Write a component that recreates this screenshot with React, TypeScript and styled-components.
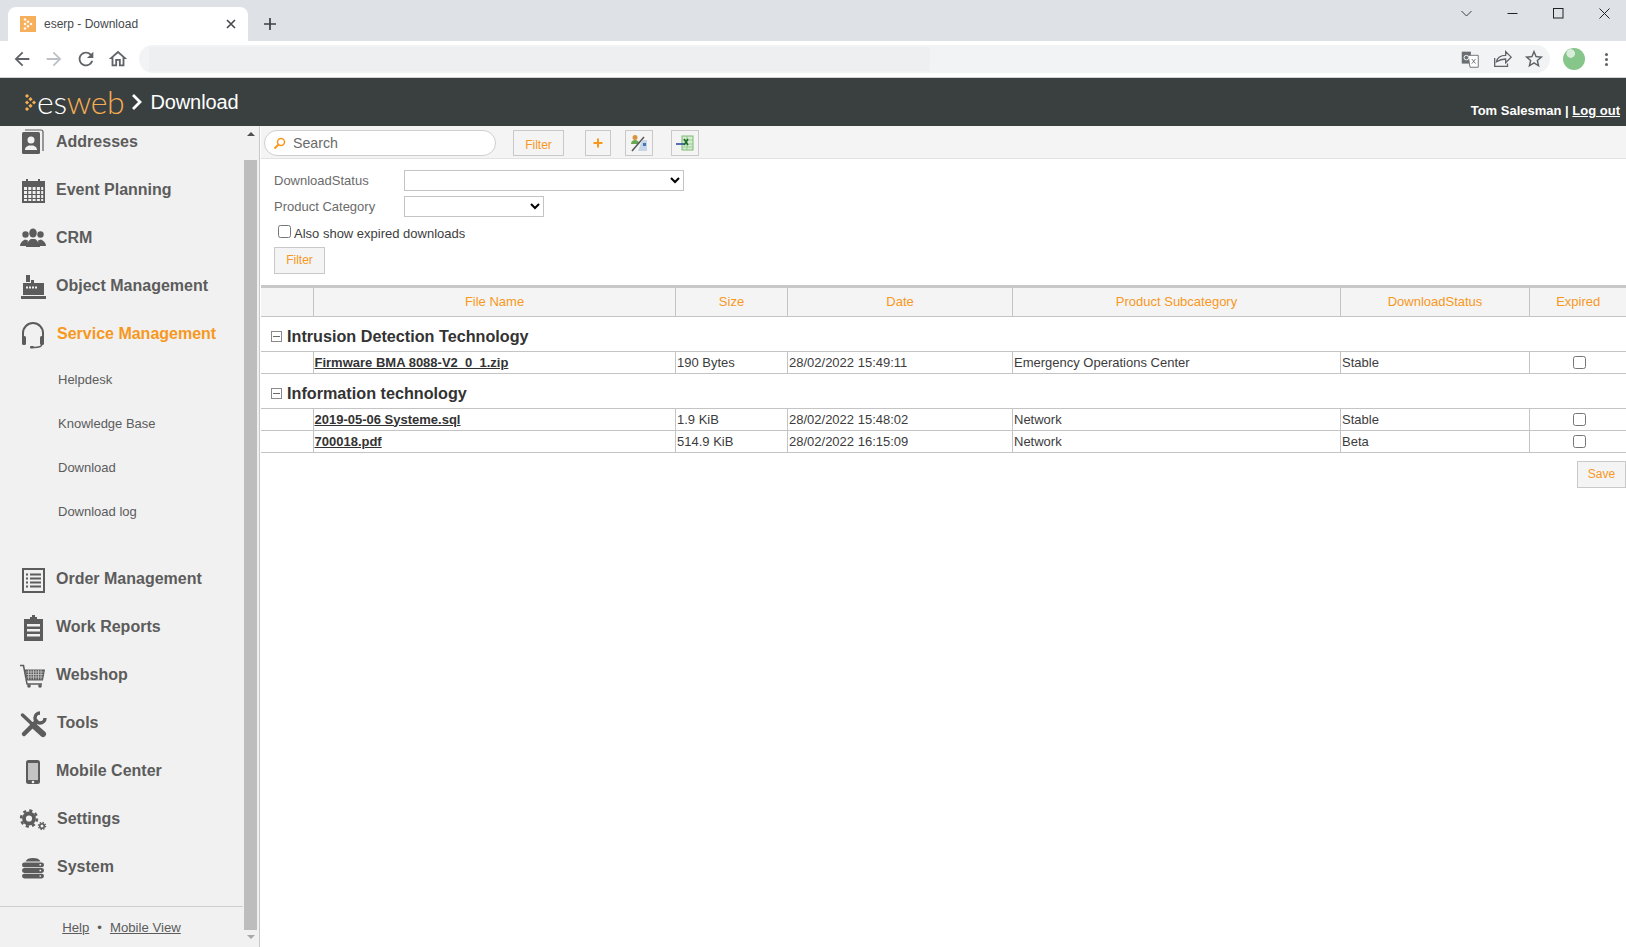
import React from 'react';
import styled, { createGlobalStyle } from 'styled-components';

const ORANGE = '#f7981d';
const GREY = '#5c5c5c';

const GlobalStyle = createGlobalStyle`
    html, body {
        margin: 0;
        height: 100%;
        overflow: hidden;
        font-family: "Liberation Sans", Arial, sans-serif;
        background: #fff;
    }
`;

const Page = styled.div`
    width: 1626px;
    height: 947px;
    display: flex;
    flex-direction: column;
    overflow: hidden;
`;

/* browser chrome */
const TabStrip = styled.div`
    height: 41px;
    flex: none;
    background: #dee1e6;
    display: flex;
    align-items: flex-end;
    padding-left: 8px;
`;

const Tab = styled.div`
    width: 240px;
    height: 34px;
    background: #fff;
    border-radius: 8px 8px 0 0;
    display: flex;
    align-items: center;
    padding: 0 12px;
    box-sizing: border-box;
    font-size: 12px;
    color: #45494d;
    gap: 8px;
`;

const TabTitle = styled.span`
    flex: 1;
`;

const NewTab = styled.div`
    width: 40px;
    height: 34px;
    display: flex;
    align-items: center;
    justify-content: center;
    margin-left: 2px;
`;

const WindowControls = styled.div`
    margin-left: auto;
    align-self: flex-start;
    display: flex;
    height: 26px;
    align-items: center;
    gap: 35px;
    padding-right: 16px;
`;

const ChromeBar = styled.div`
    height: 36px;
    flex: none;
    background: #fff;
    border-bottom: 1px solid #d0d2d5;
    display: flex;
    align-items: center;
    padding-left: 11px;
    gap: 10px;
    box-sizing: content-box;
`;

const NavIcon = styled.svg`
    width: 22px;
    height: 22px;
    flex: none;
`;

const AddressBar = styled.div`
    width: 1411px;
    height: 28px;
    background: #f1f3f4;
    border-radius: 14px;
    display: flex;
    align-items: center;
    padding-right: 5px;
    box-sizing: border-box;
    gap: 10px;
`;

const AddressRedact = styled.div`
    width: 781px;
    height: 24px;
    margin-left: 10px;
    background: #eeeff0;
    margin-right: auto;
`;

const Avatar = styled.div`
    width: 22px;
    height: 22px;
    flex: none;
    margin-left: 3px;
    border-radius: 50%;
    background: radial-gradient(circle at 35% 25%, #d8ecd9 0 4px, #86c68a 4.5px);
`;

const MenuDots = styled.div`
    width: 3px;
    height: 3px;
    flex: none;
    margin-left: 10px;
    border-radius: 50%;
    background: #5f6368;
    box-shadow: 0 -5px 0 #5f6368, 0 5px 0 #5f6368;
`;

/* application header */
const AppHeader = styled.header`
    height: 48px;
    flex: none;
    background: #3a3f3f;
    color: #fff;
    display: flex;
    align-items: center;
    padding: 0 6px 0 25px;
`;

const LogoWord = styled.span`
    font-family: "Lato", "Liberation Sans", sans-serif;
    font-weight: 300;
    font-size: 32px;
    line-height: 1;
    margin-left: 1px;
    color: #fff;
    letter-spacing: -0.3px;
`;

const LogoAccent = styled.span`
    color: #f4ad53;
`;

const LogoChevron = styled.svg`
    margin-left: 6px;
    flex: none;
`;

const HeaderTitle = styled.span`
    font-size: 20px;
    margin-left: 6px;
    letter-spacing: -0.1px;
`;

const UserBox = styled.div`
    margin-left: auto;
    align-self: flex-end;
    padding-bottom: 8px;
    font-size: 13px;
    font-weight: bold;
`;

const UserLink = styled.a`
    color: #fff;
    text-decoration: underline;
`;

const Body = styled.div`
    flex: 1;
    min-height: 0;
    display: flex;
`;

/* sidebar */
const Sidebar = styled.aside`
    width: 259px;
    flex: none;
    box-sizing: content-box;
    background: #f1f1f1;
    border-right: 1px solid #c8c8c8;
    display: flex;
`;

const SideColumn = styled.div`
    width: 243px;
    flex: none;
    display: flex;
    flex-direction: column;
    overflow: hidden;
`;

const NavList = styled.nav`
    flex: 1;
    min-height: 0;
    overflow: hidden;
`;

const NavScroll = styled.div`
    margin-top: -8px;
`;

const NavItem = styled.div<{ $active?: boolean }>`
    height: 48px;
    display: flex;
    align-items: center;
    padding-left: 18px;
    font-size: 16px;
    font-weight: bold;
    color: ${(p) => (p.$active ? ORANGE : GREY)};
`;

const ItemIcon = styled.svg<{ $nudge?: boolean }>`
    width: 30px;
    height: 30px;
    flex: none;
    margin-right: ${(p) => (p.$nudge ? '9px' : '8px')};
`;

const SubItem = styled.div`
    height: 44px;
    display: flex;
    align-items: center;
    padding-left: 58px;
    font-size: 13px;
    color: ${GREY};
`;

const SubList = styled.div`
    margin: -1px 0 22px;
`;

const SideFooter = styled.div`
    height: 40px;
    flex: none;
    border-top: 1px solid #cfcfcf;
    display: flex;
    align-items: center;
    justify-content: center;
    gap: 8px;
    font-size: 13.2px;
    color: ${GREY};
`;

const FooterLink = styled.a`
    color: ${GREY};
    text-decoration: underline;
`;

const SideScrollbar = styled.div`
    width: 16px;
    flex: none;
    display: flex;
    flex-direction: column;
`;

const ScrollArrow = styled.div<{ $down?: boolean }>`
    height: ${(p) => (p.$down ? '17px' : '34px')};
    width: 15px;
    flex: none;
    display: flex;
    justify-content: center;
    padding-top: ${(p) => (p.$down ? '5px' : '6px')};
    box-sizing: border-box;
    &::before {
        content: '';
        height: 0;
        border-left: 4px solid transparent;
        border-right: 4px solid transparent;
        ${(p) => (p.$down ? 'border-top: 4px solid #a8a8a8;' : 'border-bottom: 4px solid #4e4e4e;')}
    }
`;

const ScrollThumb = styled.div`
    width: 13px;
    flex: 1;
    margin-left: 1px;
    background: #bdbdbd;
`;

/* main area */
const Main = styled.main`
    flex: 1;
    min-width: 0;
    background: #fff;
    display: flex;
    flex-direction: column;
    margin-left: 1px;
`;

const Toolbar = styled.div`
    height: 33px;
    flex: none;
    box-sizing: border-box;
    background: #f4f4f4;
    border-bottom: 1px solid #e2e2e2;
    display: flex;
    align-items: flex-start;
    padding: 4px 0 0 3px;
`;

const SearchBox = styled.div`
    width: 232px;
    height: 26px;
    box-sizing: border-box;
    background: #fff;
    border: 1px solid #cfcfcf;
    border-radius: 13px;
    display: flex;
    align-items: center;
    padding-left: 8px;
    gap: 7px;
    font-size: 14.2px;
    color: #6a6a6a;
`;

const Button = styled.button`
    height: 26px;
    padding: 3px 0 0;
    box-sizing: border-box;
    background: #f4f4f4;
    border: 1px solid #c9c9c9;
    border-radius: 0;
    font-family: inherit;
    font-size: 12px;
    color: ${ORANGE};
    display: flex;
    align-items: center;
    justify-content: center;
`;

const ToolFilter = styled(Button)`
    width: 51px;
    margin-left: 17px;
`;

const IconButton = styled(Button)<{ $gap: number; $w: number }>`
    width: ${(p) => p.$w}px;
    margin-left: ${(p) => p.$gap}px;
    padding: 0;
`;

const FilterForm = styled.div`
    height: 126px;
    flex: none;
    box-sizing: border-box;
    padding: 11px 0 0 13px;
`;

const FieldRow = styled.div`
    display: flex;
    align-items: center;
    margin-bottom: 5px;
`;

const FieldLabel = styled.label`
    width: 130px;
    flex: none;
    font-size: 13px;
    color: #6b6b6b;
`;

const Select = styled.select<{ $w: number }>`
    width: ${(p) => p.$w}px;
    height: 21px;
    box-sizing: border-box;
    background: #fff;
    border: 1px solid #c4c4c4;
    border-radius: 0;
    font-family: inherit;
    font-size: 13px;
`;

const CheckRow = styled.label`
    display: flex;
    align-items: center;
    height: 19px;
    margin: 7px 0 4px 4px;
    font-size: 13px;
    color: #3d3d3d;
`;

const CheckBox = styled.input`
    width: 13px;
    height: 13px;
    margin: 0 3px 4px 0;
`;

const FormFilter = styled(Button)`
    width: 51px;
    height: 27px;
    padding: 0 0 1px;
`;

const TableArea = styled.div`
    border-top: 3px solid #c8c8c8;
`;

const Grid = styled.table`
    width: 100%;
    table-layout: fixed;
    border-collapse: collapse;
    font-size: 13px;
    color: #3c3c3c;
`;

const HeadCell = styled.th`
    height: 28px;
    padding: 0 0 0 1px;
    box-sizing: border-box;
    background: #f4f4f4;
    border: 1px solid #c4c4c4;
    border-top: none;
    font-weight: normal;
    color: ${ORANGE};
    text-align: center;
    &:first-child {
        border-left: none;
    }
    &:last-child {
        border-right: none;
    }
`;

const GroupCell = styled.td`
    height: 34px;
    padding: 0 0 0 10px;
    border-bottom: 1px solid #c4c4c4;
    font-size: 16.2px;
    font-weight: bold;
    color: #333;
`;

const GroupLabel = styled.div`
    display: flex;
    align-items: center;
    gap: 5px;
    padding-top: 6px;
`;

const MinusBox = styled.span`
    width: 11px;
    height: 11px;
    flex: none;
    box-sizing: border-box;
    border: 1px solid #8a8a8a;
    position: relative;
    &::after {
        content: '';
        position: absolute;
        left: 1px;
        right: 1px;
        top: 4px;
        height: 1px;
        background: #6a6a6a;
    }
`;

const Cell = styled.td<{ $center?: boolean }>`
    height: 21px;
    padding: 0 0 0 ${(p) => (p.$center ? '3px' : '1.5px')};
    border: 1px solid #c4c4c4;
    text-align: ${(p) => (p.$center ? 'center' : 'left')};
    white-space: nowrap;
    overflow: hidden;
    &:first-child {
        border-left: none;
    }
    &:last-child {
        border-right: none;
    }
`;

const FileCell = styled(Cell)`
    padding-left: 1px;
`;

const FileLink = styled.a`
    font-weight: bold;
    color: #333;
    text-decoration: underline;
`;

const RowCheck = styled.input`
    width: 13px;
    height: 13px;
    margin: 0 auto;
    display: block;
`;

const SaveRow = styled.div`
    display: flex;
    justify-content: flex-end;
    padding-top: 8px;
`;

const SaveButton = styled(Button)`
    width: 49px;
    height: 27px;
    padding: 0 0 1px;
`;

/* drawings */
const LogoArrow: React.FC = () => (
    <svg width="11" height="17" viewBox="0 0 11 17">
        <g fill="#f4ad53">
            {[[2, 2], [2, 8.5], [2, 15], [5.5, 5.2], [5.5, 11.8], [9, 8.5]].map(([x, y]) => (
                <rect key={`${x}-${y}`} x={x - 1.5} y={y - 1.5} width="3" height="3" transform={`rotate(45 ${x} ${y})`} />
            ))}
        </g>
    </svg>
);

const icons: Record<string, React.ReactNode> = {
    addresses: (
        <>
            <path d="M7 3h16a2 2 0 0 1 2 2v19" fill="none" stroke="#5c5c5c" strokeWidth="1.200" />
            <rect x="4" y="5" width="18" height="22" rx="1.500" fill="#5c5c5c" />
            <circle cx="13" cy="13" r="3.500" fill="#f1f1f1" />
            <path d="M7 23c0-3 2-3.500 4-4.500h4c2 1 4 1.500 4 4.500z" fill="#f1f1f1" />
        </>
    ),
    calendar: (
        <>
            <path d="M4 6h4V4h2v2h10V4h2v2h5v22H4z" fill="#5c5c5c" />
            <path d="M6 12h3v3H6zm4.300 0h3v3h-3zm4.300 0h3v3h-3zm4.300 0h3v3h-3zm4.300 0h2v3h-2zM6 16h3v3H6zm4.300 0h3v3h-3zm4.300 0h3v3h-3zm4.300 0h3v3h-3zm4.300 0h2v3h-2zM6 20h3v3H6zm4.300 0h3v3h-3zm4.300 0h3v3h-3zm4.300 0h3v3h-3zm4.300 0h2v3h-2zM6 24h3v2H6zm4.300 0h3v2h-3zm4.300 0h3v2h-3zm4.300 0h3v2h-3zm4.300 0h2v2h-2z" fill="#f1f1f1" />
        </>
    ),
    crm: (
        <g fill="#5c5c5c">
            <circle cx="7.500" cy="11.500" r="3.200" />
            <circle cx="22.500" cy="11.500" r="3.200" />
            <path d="M2 23c0-3 2-5 5-6.500l3 1-1 5.500zM28 23c0-3-2-5-5-6.500l-3 1 1 5.500z" />
            <ellipse cx="15" cy="10" rx="3.800" ry="4.500" />
            <path d="M8 24c0-4 3-6.500 5-8h4c2 1.500 5 4 5 8z" />
        </g>
    ),
    factory: (
        <g fill="#5c5c5c">
            <path d="M8 4h4v7H8zM13 9h3v3h-3z" />
            <path d="M5 12h21v12H5zM3 25h25v3H3z" />
            <path d="M8 15.500h2v2H8zm3 0h2v2h-2zm3 0h2v2h-2zm3 0h2v2h-2z" fill="#f1f1f1" />
        </g>
    ),
    headset: (
        <g>
            <path d="M5 19v-5a10 10 0 0 1 20 0v5" fill="none" stroke="#5c5c5c" strokeWidth="2" />
            <rect x="4" y="17" width="4" height="9" rx="1.500" fill="#5c5c5c" />
            <rect x="22" y="17" width="4" height="9" rx="1.500" fill="#5c5c5c" />
            <path d="M24 25c0 3-4 3.500-8 3.500" fill="none" stroke="#5c5c5c" strokeWidth="1.500" />
            <rect x="12" y="27" width="4" height="2.500" rx="1" fill="#5c5c5c" />
        </g>
    ),
    order: (
        <g>
            <rect x="5" y="5" width="21" height="23" fill="none" stroke="#5c5c5c" strokeWidth="2" />
            <path d="M8 9.500h2v2H8zm4 0h11v2H12zM8 13.500h2v2H8zm4 0h11v2H12zM8 17.500h2v2H8zm4 0h11v2H12zM8 21.500h2v2H8zm4 0h11v2H12z" fill="#5c5c5c" />
        </g>
    ),
    report: (
        <g>
            <path d="M6 7h6V5h2V3h3v2h2v2h6v22H6z" fill="#5c5c5c" />
            <path d="M9 12h13v2.500H9zM9 17h13v2.500H9zM9 22h13v2.500H9z" fill="#f1f1f1" />
        </g>
    ),
    cart: (
        <g>
            <path d="M2 5.500h3.500L9 24h15" fill="none" stroke="#5c5c5c" strokeWidth="1.500" />
            <path d="M6.500 9.500H27L25 20.500H9z" fill="#5c5c5c" />
            <path d="M8 12h17.500M8.500 14.500h16.500M9 17h15.500M10.500 10v9.500M13 10v9.500M15.500 10v9.500M18 10v9.500M20.500 10v9.500M23 10v9.500" stroke="#c9c9c9" strokeWidth=".8" fill="none" />
            <circle cx="11" cy="26" r="1.800" fill="#5c5c5c" />
            <circle cx="22" cy="26" r="1.800" fill="#5c5c5c" />
        </g>
    ),
    tools: (
        <g fill="none" stroke="#5c5c5c">
            <path d="M4.500 7L12.500 14.500" strokeWidth="3.500" strokeLinecap="round" />
            <path d="M15 17L25 26" strokeWidth="6" strokeLinecap="round" />
            <path d="M6 26L18.500 13.500" strokeWidth="4.500" strokeLinecap="round" />
            <path d="M27 10A5 5 0 0 1 22 15A5 5 0 0 1 17 10A5 5 0 0 1 22 5" strokeWidth="3.500" />
        </g>
    ),
    mobile: (
        <g>
            <rect x="8" y="4" width="14" height="24" rx="2.500" fill="#5c5c5c" />
            <rect x="10" y="7" width="10" height="17" fill="#c4c4c4" />
            <circle cx="15" cy="26" r="1.300" fill="#f1f1f1" />
        </g>
    ),
    settings: (
        <g fill="none" stroke="#5c5c5c">
            <circle cx="11" cy="14.500" r="5" strokeWidth="3.800" />
            <circle cx="11" cy="14.500" r="8" strokeWidth="2.400" strokeDasharray="3.200 3.080" />
            <circle cx="24" cy="22" r="2.300" strokeWidth="1.600" />
            <circle cx="24" cy="22" r="3.600" strokeWidth="1.200" strokeDasharray="1.400 1.430" />
        </g>
    ),
    system: (
        <g fill="#5c5c5c">
            <path d="M7.500 9.500C8.500 7 11 6 15 6s6.500 1 7.500 3.500z" />
            <rect x="4" y="10.500" width="22" height="4.800" rx="2.400" />
            <rect x="4" y="16.100" width="22" height="4.800" rx="2.400" />
            <rect x="4" y="21.700" width="22" height="4.800" rx="2.400" />
            <path d="M21.500 12h1.600v1.400h-1.600zM21.500 17.800h1.600v1.400h-1.600zM21.500 23.400h1.600v1.400h-1.600z" fill="#f1f1f1" />
        </g>
    ),
};

const Icon: React.FC<{ name: string; nudge?: boolean }> = ({ name, nudge }) => (
    <ItemIcon viewBox="0 0 30 30" $nudge={nudge}>
        {icons[name]}
    </ItemIcon>
);

const topItems = [
    ['Addresses', 'addresses'],
    ['Event Planning', 'calendar'],
    ['CRM', 'crm'],
    ['Object Management', 'factory'],
];

const bottomItems = [
    ['Order Management', 'order'],
    ['Work Reports', 'report'],
    ['Webshop', 'cart'],
    ['Tools', 'tools', 'nudge'],
    ['Mobile Center', 'mobile'],
    ['Settings', 'settings', 'nudge'],
    ['System', 'system', 'nudge'],
];

const columns = [
    { title: '', width: 52 },
    { title: 'File Name', width: 362 },
    { title: 'Size', width: 112 },
    { title: 'Date', width: 225 },
    { title: 'Product Subcategory', width: 328 },
    { title: 'DownloadStatus', width: 189 },
    { title: 'Expired', width: 97 },
];

const groups = [
    {
        name: 'Intrusion Detection Technology',
        rows: [['Firmware BMA 8088-V2_0_1.zip', '190 Bytes', '28/02/2022 15:49:11', 'Emergency Operations Center', 'Stable']],
    },
    {
        name: 'Information technology',
        rows: [
            ['2019-05-06 Systeme.sql', '1.9 KiB', '28/02/2022 15:48:02', 'Network', 'Stable'],
            ['700018.pdf', '514.9 KiB', '28/02/2022 16:15:09', 'Network', 'Beta'],
        ],
    },
];

const App: React.FC = () => {
    return (
        <Page>
            <GlobalStyle />
            <TabStrip>
                <Tab>
                    <svg width="16" height="16" viewBox="0 0 16 16">
                        <rect width="16" height="16" fill="#f6b05c" />
                        <g fill="#fff">
                            {[[5, 3.5], [5, 8], [5, 12.5], [8, 5.700], [8, 10.300], [11, 8]].map(([x, y]) => (
                                <rect key={`${x}-${y}`} x={x - 1.1} y={y - 1.1} width="2.2" height="2.2" transform={`rotate(45 ${x} ${y})`} />
                            ))}
                        </g>
                    </svg>
                    <TabTitle>eserp - Download</TabTitle>
                    <svg width="10" height="10" viewBox="0 0 10 10">
                        <path d="M1 1l8 8M9 1l-8 8" stroke="#45494d" strokeWidth="1.600" />
                    </svg>
                </Tab>
                <NewTab>
                    <svg width="12" height="12" viewBox="0 0 12 12">
                        <path d="M6 0v12M0 6h12" stroke="#3c4043" strokeWidth="1.700" />
                    </svg>
                </NewTab>
                <WindowControls>
                    <svg width="11" height="11" viewBox="0 0 11 11">
                        <path d="M.5 3l5 5 5-5" fill="none" stroke="#3c4043" />
                    </svg>
                    <svg width="11" height="11" viewBox="0 0 11 11">
                        <path d="M.5 5.500h10" stroke="#222" />
                    </svg>
                    <svg width="11" height="11" viewBox="0 0 11 11">
                        <rect x=".5" y=".5" width="9.500" height="9.500" fill="none" stroke="#222" />
                    </svg>
                    <svg width="11" height="11" viewBox="0 0 11 11">
                        <path d="M.5.500l10 10M10.500.500l-10 10" stroke="#222" />
                    </svg>
                </WindowControls>
            </TabStrip>
            <ChromeBar>
                <NavIcon viewBox="0 0 24 24">
                    <path fill="#5f6368" d="M20 11H7.830l5.590-5.590L12 4l-8 8 8 8 1.410-1.410L7.830 13H20v-2z" />
                </NavIcon>
                <NavIcon viewBox="0 0 24 24">
                    <path fill="#bdc1c6" d="M4 11h12.170l-5.590-5.590L12 4l8 8-8 8-1.410-1.410L16.170 13H4v-2z" />
                </NavIcon>
                <NavIcon viewBox="0 0 24 24">
                    <path fill="#5f6368" d="M17.650 6.350A7.958 7.958 0 0 0 12 4c-4.420 0-7.990 3.580-7.990 8s3.570 8 7.990 8c3.730 0 6.840-2.550 7.730-6h-2.080A5.990 5.990 0 0 1 12 18c-3.310 0-6-2.690-6-6s2.690-6 6-6c1.660 0 3.140.690 4.220 1.780L13 11h7V4l-2.350 2.350z" />
                </NavIcon>
                <NavIcon viewBox="0 0 24 24">
                    <path fill="#5f6368" d="M12 5.690l5 4.500V18h-2v-6H9v6H7v-7.810l5-4.500M12 3L2 12h3v8h6v-6h2v6h6v-8h3L12 3z" />
                </NavIcon>
                <AddressBar>
                    <AddressRedact />
                    <NavIcon viewBox="0 0 24 24">
                        <rect x="3" y="4" width="10" height="13" fill="#6a6e72" />
                        <path d="M10 8h11v13H12z" fill="#fff" stroke="#6a6e72" />
                        <circle cx="8" cy="10.500" r="2.500" fill="none" stroke="#fff" />
                        <path d="M14 12l4 5M18 12l-4 5" stroke="#6a6e72" />
                    </NavIcon>
                    <NavIcon viewBox="0 0 24 24">
                        <path d="M4 11v9h14v-3M6 15c1-5 5-7 10-7V4l6 6-6 6v-4c-4 0-7 1-10 3z" fill="none" stroke="#5f6368" strokeWidth="1.400" />
                    </NavIcon>
                    <NavIcon viewBox="0 0 24 24">
                        <path fill="#5f6368" d="M22 9.240l-7.190-.620L12 2 9.190 8.630 2 9.240l5.460 4.730L5.820 21 12 17.270 18.180 21l-1.630-7.030L22 9.240zM12 15.400l-3.760 2.270 1-4.280-3.320-2.880 4.380-.380L12 6.100l1.710 4.040 4.380.380-3.320 2.880 1 4.280L12 15.400z" />
                    </NavIcon>
                </AddressBar>
                <Avatar />
                <MenuDots />
            </ChromeBar>
            <AppHeader>
                <LogoArrow />
                <LogoWord>
                    es<LogoAccent>web</LogoAccent>
                </LogoWord>
                <LogoChevron width="14" height="20" viewBox="0 0 14 20">
                    <path d="M3 3l7 7-7 7" fill="none" stroke="#fff" strokeWidth="2.800" />
                </LogoChevron>
                <HeaderTitle>Download</HeaderTitle>
                <UserBox>
                    Tom Salesman | <UserLink>Log out</UserLink>
                </UserBox>
            </AppHeader>
            <Body>
                <Sidebar>
                    <SideColumn>
                        <NavList>
                            <NavScroll>
                                {topItems.map(([label, icon]) => (
                                    <NavItem key={label}>
                                        <Icon name={icon} />
                                        {label}
                                    </NavItem>
                                ))}
                                <NavItem $active>
                                    <Icon name="headset" nudge />
                                    Service Management
                                </NavItem>
                                <SubList>
                                    {['Helpdesk', 'Knowledge Base', 'Download', 'Download log'].map((label) => (
                                        <SubItem key={label}>{label}</SubItem>
                                    ))}
                                </SubList>
                                {bottomItems.map(([label, icon, nudge]) => (
                                    <NavItem key={label}>
                                        <Icon name={icon} nudge={Boolean(nudge)} />
                                        {label}
                                    </NavItem>
                                ))}
                            </NavScroll>
                        </NavList>
                        <SideFooter>
                            <FooterLink>Help</FooterLink>
                            <span>•</span>
                            <FooterLink>Mobile View</FooterLink>
                        </SideFooter>
                    </SideColumn>
                    <SideScrollbar>
                        <ScrollArrow />
                        <ScrollThumb />
                        <ScrollArrow $down />
                    </SideScrollbar>
                </Sidebar>
                <Main>
                    <Toolbar>
                        <SearchBox>
                            <svg width="13" height="13" viewBox="0 0 13 13">
                                <circle cx="8" cy="5" r="3.500" fill="none" stroke={ORANGE} strokeWidth="1.500" />
                                <path d="M5.500 7.500L1.500 11.500" stroke={ORANGE} strokeWidth="2" />
                            </svg>
                            Search
                        </SearchBox>
                        <ToolFilter>Filter</ToolFilter>
                        <IconButton $gap={21} $w={26}>
                            <svg width="10" height="10" viewBox="0 0 10 10">
                                <path d="M5 .5v9M.5 5h9" stroke={ORANGE} strokeWidth="2" />
                            </svg>
                        </IconButton>
                        <IconButton $gap={14} $w={28}>
                            <svg width="18" height="18" viewBox="0 0 18 18">
                                <circle cx="5" cy="3.500" r="2.500" fill="#d9933f" />
                                <path d="M1 10c0-3 2-4 4-4s4 1 4 4z" fill="#6aa84f" />
                                <path d="M2 17L14 3" stroke="#555" strokeWidth="1.500" />
                                <path d="M12 6h5v11H8z" fill="#c7d6e6" />
                                <path d="M13 9h3v3h-3z" fill="#3f78b5" />
                            </svg>
                        </IconButton>
                        <IconButton $gap={18} $w={28}>
                            <svg width="18" height="18" viewBox="0 0 18 18">
                                <rect x="6" y="2" width="11" height="14" fill="#d5ebd2" stroke="#7dbb75" />
                                <path d="M6 6h11M6 10h11M6 13h11M11 2v14" stroke="#8cc484" strokeWidth=".8" />
                                <path d="M8 5l4 6M12 5l-4 6" stroke="#1f6b2d" strokeWidth="1.600" />
                                <path d="M0 10h8" stroke="#2f4fa0" strokeWidth="1.600" />
                            </svg>
                        </IconButton>
                    </Toolbar>
                    <FilterForm>
                        <FieldRow>
                            <FieldLabel>DownloadStatus</FieldLabel>
                            <Select $w={280}>
                                <option />
                            </Select>
                        </FieldRow>
                        <FieldRow>
                            <FieldLabel>Product Category</FieldLabel>
                            <Select $w={140}>
                                <option />
                            </Select>
                        </FieldRow>
                        <CheckRow>
                            <CheckBox type="checkbox" />
                            Also show expired downloads
                        </CheckRow>
                        <FormFilter>Filter</FormFilter>
                    </FilterForm>
                    <TableArea>
                        <Grid>
                            <colgroup>
                                {columns.map((c) => (
                                    <col key={c.title} width={c.width} />
                                ))}
                            </colgroup>
                            <thead>
                                <tr>
                                    {columns.map((c) => (
                                        <HeadCell key={c.title}>{c.title}</HeadCell>
                                    ))}
                                </tr>
                            </thead>
                            <tbody>
                                {groups.map((group) => (
                                    <React.Fragment key={group.name}>
                                        <tr>
                                            <GroupCell colSpan={7}>
                                                <GroupLabel>
                                                    <MinusBox />
                                                    {group.name}
                                                </GroupLabel>
                                            </GroupCell>
                                        </tr>
                                        {group.rows.map((row) => (
                                            <tr key={row[0]}>
                                                <Cell />
                                                <FileCell>
                                                    <FileLink>{row[0]}</FileLink>
                                                </FileCell>
                                                {row.slice(1).map((value, i) => (
                                                    <Cell key={i}>{value}</Cell>
                                                ))}
                                                <Cell $center>
                                                    <RowCheck type="checkbox" />
                                                </Cell>
                                            </tr>
                                        ))}
                                    </React.Fragment>
                                ))}
                            </tbody>
                        </Grid>
                    </TableArea>
                    <SaveRow>
                        <SaveButton>Save</SaveButton>
                    </SaveRow>
                </Main>
            </Body>
        </Page>
    );
};

export default App;
